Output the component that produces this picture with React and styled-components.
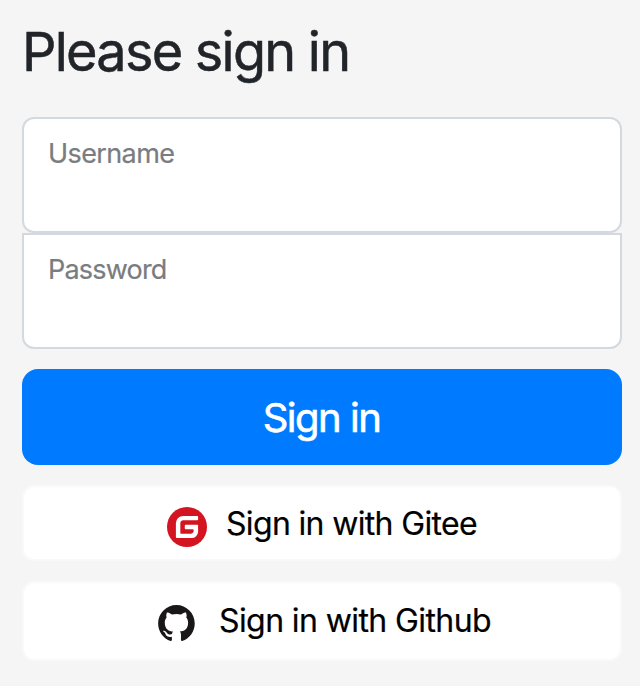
import React from 'react';
import styled, { createGlobalStyle } from 'styled-components';

const GlobalStyle = createGlobalStyle`
  * { box-sizing: border-box; }
  body { margin: 0; background: #f5f5f5; font-family: Inter, "Liberation Sans", sans-serif; }
  button, input { font-family: inherit; }
`;

const Page = styled.main`
  min-height: 686px;
  padding: 18px 18px 0 22px;
  background: #f5f5f5;
`;

const Form = styled.form`
  display: flex;
  flex-direction: column;
  margin: 0;
`;

const Title = styled.h1`
  margin: 0 0 32px;
  height: 67px;
  font-size: 54px;
  font-weight: 400;
  line-height: 67px;
  letter-spacing: -1.75px;
  color: #212529;
  -webkit-text-stroke: 0.5px #212529;
`;

const Field = styled.label`
  display: block;
  height: 116px;
  padding: 18px 24px;
  border: 2px solid #d3d9df;
  border-radius: ${(p) => (p.$last ? '0 0 12px 12px' : '12px')};
  background: #fff;
  color: #797c80;
  font-size: 27px;
  line-height: 34px;
  letter-spacing: ${(p) => (p.$last ? '-0.8px' : '-0.6px')};
  -webkit-text-stroke: 0.2px #797c80;
`;

const FieldText = styled.span`
  display: block;
`;

const SubmitButton = styled.button`
  height: 96px;
  margin-top: 20px;
  padding: 0 1px 0 0;
  border: 0;
  border-radius: 16px;
  background: #007bff;
  color: #fff;
  font-size: 40px;
  letter-spacing: -1.5px;
  -webkit-text-stroke: 0.6px #fff;
`;

const ProviderButton = styled.button`
  display: flex;
  align-items: center;
  justify-content: center;
  gap: ${(p) => p.$gap}px;
  height: ${(p) => p.$height}px;
  margin-top: 20px;
  padding: 0 0 0 ${(p) => p.$indent}px;
  border: 2px solid #f9f9f9;
  border-radius: 12px;
  background: #fff;
  color: #000;
  font-size: 32px;
  letter-spacing: ${(p) => p.$tracking}px;
  -webkit-text-stroke: 0.2px #000;
`;

const ProviderLabel = styled.span`
  margin-bottom: ${(p) => p.$lift}px;
`;

const Icon = styled.svg`
  display: block;
  flex: none;
  margin-top: ${(p) => p.$drop}px;
`;

const GiteeIcon = () => (
  <Icon width="40" height="40" viewBox="0 0 24 24" $drop={8}>
    <circle cx="12" cy="12" r="12" fill="#d41421" />
    <path fill="#fff" d="M18.074 5.333c.328 0 .593.266.592.593v1.482a.594.594 0 0 1-.593.592H9.777c-.982 0-1.778.796-1.778 1.778v5.63c0 .327.266.592.593.592h5.63c.982 0 1.778-.796 1.778-1.778v-.296a.593.593 0 0 0-.592-.593h-4.15a.592.592 0 0 1-.592-.592v-1.482a.593.593 0 0 1 .593-.592h6.815c.327 0 .593.265.593.592v3.408a4 4 0 0 1-4 4H5.926a.593.593 0 0 1-.593-.593V9.778a4.444 4.444 0 0 1 4.445-4.444h8.296z" />
  </Icon>
);

const GithubIcon = () => (
  <Icon width="37" height="36" viewBox="0 0 98 96" $drop={4}>
    <path fill="#191717" fillRule="evenodd" d="M48.854 0C21.839 0 0 22 0 49.217c0 21.756 13.993 40.172 33.405 46.69 2.427.49 3.316-1.059 3.316-2.362 0-1.141-.08-5.052-.08-9.127-13.59 2.934-16.42-5.867-16.42-5.867-2.184-5.704-5.42-7.17-5.42-7.17-4.448-3.015.324-3.015.324-3.015 4.934.326 7.523 5.052 7.523 5.052 4.367 7.496 11.404 5.378 14.235 4.074.404-3.178 1.699-5.378 3.074-6.6-10.839-1.141-22.243-5.378-22.243-24.283 0-5.378 1.94-9.778 5.014-13.2-.485-1.222-2.184-6.275.486-13.038 0 0 4.125-1.304 13.426 5.052a46.97 46.97 0 0 1 12.214-1.63c4.125 0 8.33.571 12.213 1.63 9.302-6.356 13.427-5.052 13.427-5.052 2.67 6.763.97 11.816.485 13.038 3.155 3.422 5.015 7.822 5.015 13.2 0 18.905-11.404 23.06-22.324 24.283 1.78 1.548 3.316 4.481 3.316 9.126 0 6.6-.08 11.897-.08 13.526 0 1.304.89 2.853 3.316 2.364 19.412-6.52 33.405-24.935 33.405-46.691C97.707 22 75.788 0 48.854 0z" />
  </Icon>
);

export default function App() {
  return (
    <>
      <GlobalStyle />
      <Page>
        <Form>
          <Title>Please sign in</Title>
          <Field><FieldText>Username</FieldText></Field>
          <Field $last><FieldText>Password</FieldText></Field>
          <SubmitButton type="button">Sign in</SubmitButton>
          <ProviderButton type="button" $height={76} $gap={19} $indent={0} $tracking={-0.66}>
            <GiteeIcon />
            <ProviderLabel $lift={0}>Sign in with Gitee</ProviderLabel>
          </ProviderButton>
          <ProviderButton type="button" $height={80} $gap={24} $indent={5} $tracking={-0.6}>
            <GithubIcon />
            <ProviderLabel $lift={2}>Sign in with Github</ProviderLabel>
          </ProviderButton>
        </Form>
      </Page>
    </>
  );
}
